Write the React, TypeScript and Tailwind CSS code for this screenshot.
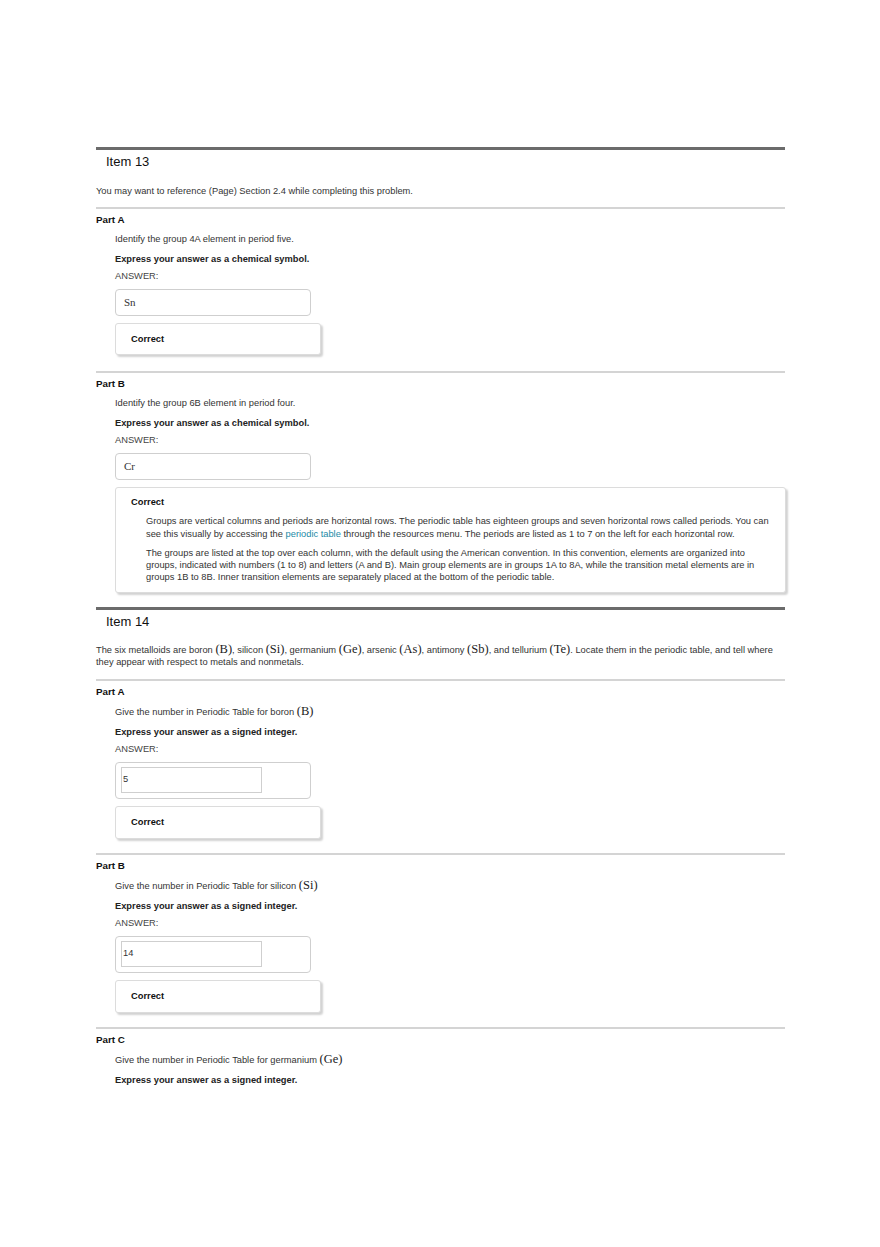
import React from "react";

// Homework review page: two items, each with parts, answers and "Correct" feedback.

const sans = "font-['Liberation_Sans',Arial,sans-serif]";
const serif = "font-['Liberation_Serif','Times_New_Roman',serif]";

function M({ children }: { children: React.ReactNode }) {
  // inline math, typeset the way the original shows chemical symbols
  return <span className={`${serif} text-[12.5px] leading-none text-[#222]`}>({children})</span>;
}

function ItemHeader({ title }: { title: string }) {
  return (
    <div className="border-t-[3px] border-[#6b6b6b]">
      <div className="mt-[4px] pl-[10px] text-[13px] leading-[16px] text-[#111]">{title}</div>
    </div>
  );
}

function Divider({ className = "" }: { className?: string }) {
  return <div className={`h-[2px] bg-[#d4d4d4] ${className}`} />;
}

function CorrectBox({ wide, tall, children }: { wide?: boolean; tall?: boolean; children?: React.ReactNode }) {
  return (
    <div
      className={`mt-[7px] rounded-[3px] border border-[#dcdcdc] bg-white shadow-[2px_2px_2px_rgba(0,0,0,0.18)] ${
        wide ? "w-[671px] pb-[9px] pt-[8px]" : tall ? "w-[206px] pb-[10px] pt-[9px]" : "w-[206px] py-[9px]"
      }`}
    >
      <div className="pl-[15px] text-[9.3px] font-bold leading-[12px] text-[#111]">Correct</div>
      {children}
    </div>
  );
}

function SymbolAnswer({ value }: { value: string }) {
  return (
    <div className="mt-[7px] flex h-[27px] w-[196px] items-center rounded-[4px] border border-[#cfcfcf] pl-[8px]">
      <span className={`${serif} text-[11px] text-[#333]`}>{value}</span>
    </div>
  );
}

function NumberAnswer({ value }: { value: string }) {
  return (
    <div className="mt-[7px] h-[37px] w-[196px] rounded-[4px] border border-[#cfcfcf] pl-[5px] pt-[4px]">
      <div className="flex h-[26px] w-[141px] items-center border border-[#cfcfcf] pl-[1px] text-[9.3px] text-[#333]">
        {value}
      </div>
    </div>
  );
}

function Part({
  label,
  prompt,
  hint,
  children,
}: {
  label: string;
  prompt: React.ReactNode;
  hint: string;
  children?: React.ReactNode;
}) {
  return (
    <div>
      <div className="mt-[5px] text-[9.8px] font-bold leading-[12px] text-[#111]">{label}</div>
      <div className="pl-[19px]">
        <div className="mt-[7px] text-[9.3px] leading-[12px] text-[#333]">{prompt}</div>
        <div className="mt-[8px] text-[9.3px] font-bold leading-[12px] text-[#222]">{hint}</div>
        {children}
      </div>
    </div>
  );
}

function AnswerLabel() {
  return <div className="mt-[5px] text-[9.3px] leading-[12px] text-[#444]">ANSWER:</div>;
}

export default function App() {
  return (
    <div className={`${sans} min-h-[1247px] w-[880px] bg-white`}>
      <div className="ml-[96px] w-[689px] pt-[147px]">
        {/* Item 13 */}
        <ItemHeader title="Item 13" />
        <div className="mt-[15px] text-[9.3px] leading-[12px] text-[#333]">
          You may want to reference (Page) Section 2.4 while completing this problem.
        </div>
        <Divider className="mt-[10px]" />
        <Part label="Part A" prompt="Identify the group 4A element in period five." hint="Express your answer as a chemical symbol.">
          <AnswerLabel />
          <SymbolAnswer value="Sn" />
          <CorrectBox />
        </Part>
        <Divider className="mt-[16px]" />
        <Part label="Part B" prompt="Identify the group 6B element in period four." hint="Express your answer as a chemical symbol.">
          <AnswerLabel />
          <SymbolAnswer value="Cr" />
          <CorrectBox wide>
            <div className="pl-[30px] pr-[12px] text-[9.3px] text-[#333]">
              <p className="mt-[7px] leading-[13px]">
                Groups are vertical columns and periods are horizontal rows. The periodic table has eighteen groups and
                seven horizontal rows called periods. You can see this visually by accessing the{" "}
                <span className="text-[#1b8aa6]">periodic table</span> through the resources menu. The periods are listed
                as 1 to 7 on the left for each horizontal row.
              </p>
              <p className="mt-[6px] leading-[12px]">
                The groups are listed at the top over each column, with the default using the American convention. In this
                convention, elements are organized into groups, indicated with numbers (1 to 8) and letters (A and B). Main
                group elements are in groups 1A to 8A, while the transition metal elements are in groups 1B to 8B. Inner
                transition elements are separately placed at the bottom of the periodic table.
              </p>
            </div>
          </CorrectBox>
        </Part>

        {/* Item 14 */}
        <div className="mt-[14px]">
          <ItemHeader title="Item 14" />
        </div>
        <div className="mt-[13px] text-[9.3px] leading-[12px] text-[#333]">
          The six metalloids are boron <M>B</M>, silicon <M>Si</M>, germanium <M>Ge</M>, arsenic <M>As</M>, antimony{" "}
          <M>Sb</M>, and tellurium <M>Te</M>. Locate them in the periodic table, and tell where they appear with respect
          to metals and nonmetals.
        </div>
        <Divider className="mt-[11px]" />
        <Part
          label="Part A"
          prompt={
            <>
              Give the number in Periodic Table for boron <M>B</M>
            </>
          }
          hint="Express your answer as a signed integer."
        >
          <AnswerLabel />
          <NumberAnswer value="5" />
          <CorrectBox tall />
        </Part>
        <Divider className="mt-[14px]" />
        <Part
          label="Part B"
          prompt={
            <>
              Give the number in Periodic Table for silicon <M>Si</M>
            </>
          }
          hint="Express your answer as a signed integer."
        >
          <AnswerLabel />
          <NumberAnswer value="14" />
          <CorrectBox tall />
        </Part>
        <Divider className="mt-[14px]" />
        <Part
          label="Part C"
          prompt={
            <>
              Give the number in Periodic Table for germanium <M>Ge</M>
            </>
          }
          hint="Express your answer as a signed integer."
        />
      </div>
    </div>
  );
}
